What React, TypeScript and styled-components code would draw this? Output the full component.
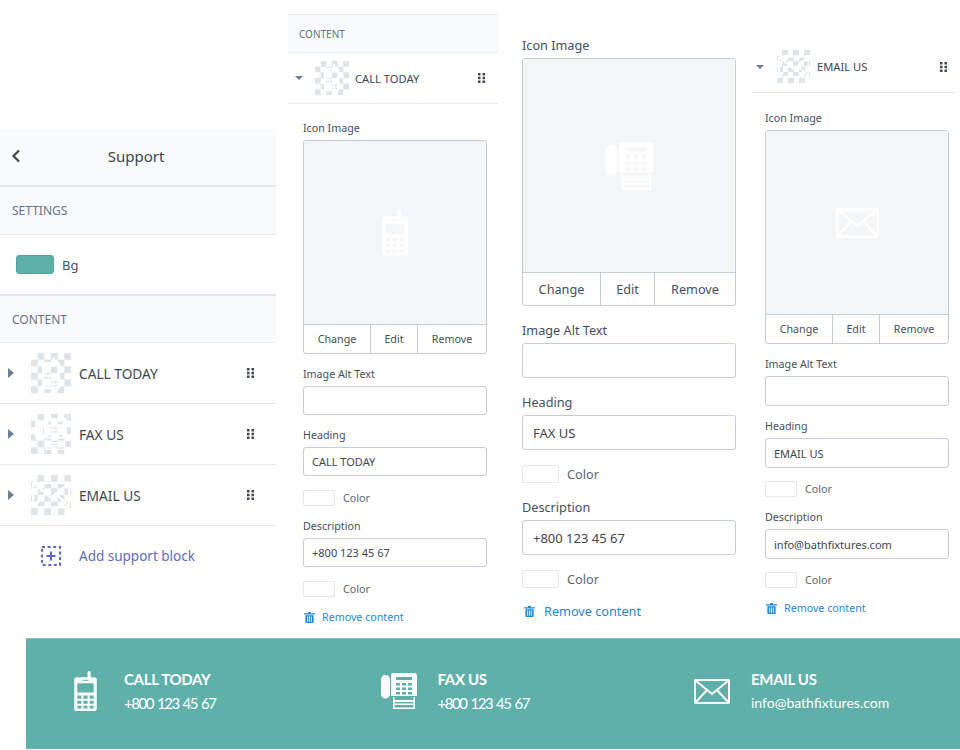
import React from "react";
import styled, {createGlobalStyle, ThemeProvider} from "styled-components";

const GlobalStyle = createGlobalStyle`
  html, body {
    margin: 0;
    padding: 0;
    background: white;
    font-family: "Noto Sans", "Open Sans", sans-serif;
    color: #454f5b;
  }
`;

const compact = {
    width: "184px", inset: "15px", font: "10.7px", line: "18px", labelGap: "3px", fieldGap: "11px", boxGap: "0",
    boxHeight: "211px", buttonHeight: "28px", buttons: "66px 47px 1fr",
    inputHeight: "29px", swatchW: "32px", swatchH: "16px", swatchGap: "14px",
    removeGap: "13px", inputFont: "11px", inputPad: "8px", removeGapX: "7px", removeInset: "1px",
};

const narrowForm = {
    ...compact,
    inset: "13px", boxGap: "2px", inputHeight: "30px", swatchGap: "13px",
};

const large = {
    ...compact,
    width: "214px", inset: "0", font: "12.7px", line: "20px", labelGap: "3px", fieldGap: "14px",
    boxHeight: "245px", buttonHeight: "32px", buttons: "77px 54px 1fr",
    inputHeight: "35px", swatchW: "37px", swatchH: "18px", swatchGap: "15px",
    removeGap: "14px", inputFont: "13px", inputPad: "10px", removeGapX: "9px", removeInset: "2px",
};

const Page = styled.div`
  width: 960px;
  height: 750px;
  overflow: hidden;
`;

const Collage = styled.div`
  display: flex;
  height: 638px;
`;

const Column = styled.div<{ $width: number; $left: number; $top: number }>`
  width: ${p => p.$width}px;
  margin-left: ${p => p.$left}px;
  padding-top: ${p => p.$top}px;
  flex-shrink: 0;
`;

const Header = styled.div`
  display: flex;
  align-items: center;
  justify-content: center;
  box-sizing: border-box;
  height: 58px;
  padding-bottom: 2px;
  background: #f9fafb;
  border-bottom: 2px solid #e3e6ea;
  font-size: 15px;
  color: #3d4650;
`;

const BackBtn = styled.svg`
  width: 10px;
  height: 14px;
  margin-left: 11px;
  margin-right: auto;
`;

const Title = styled.span`
  margin-right: auto;
  margin-left: -25px;
`;

const Band = styled.div<{ $small?: boolean; $height: number }>`
  display: flex;
  align-items: center;
  height: ${p => p.$height}px;
  padding-left: ${p => (p.$small ? "11px" : "12px")};
  background: #f9fafb;
  border-top: ${p => (p.$small ? "1px solid #e3e6ea" : "none")};
  border-bottom: 1px solid #e9ecef;
  font-size: ${p => (p.$small ? "10px" : "12px")};
  color: #637381;
`;

const SettingRow = styled.div`
  display: flex;
  align-items: center;
  gap: 8px;
  height: 59px;
  padding-left: 16px;
  border-bottom: 2px solid #e3e6ea;
  font-size: 13px;
`;

const BgSwatch = styled.span`
  width: 36px;
  height: 17px;
  background: #5fb0a9;
  border: 1px solid #57a19a;
  border-radius: 3px;
`;

const BlockRow = styled.div<{ $open?: boolean; $height: number; $pad: number; $end: number }>`
  display: flex;
  align-items: center;
  height: ${p => p.$height}px;
  padding-left: ${p => p.$pad}px;
  padding-right: ${p => p.$end}px;
  border-bottom: 1px solid #e3e6ea;
  font-size: ${p => (p.$open ? "11.2px" : "13.7px")};
  color: #3d4650;
`;

const Caret = styled.span<{ $open?: boolean; $gap: number }>`
  width: 0;
  height: 0;
  margin-right: ${p => p.$gap}px;
  border-style: solid;
  border-color: transparent;
  ${p =>
    p.$open
        ? `border-width: 4px 4px 0 4px; border-top-color: #6b8094;`
        : `border-width: 5px 0 5px 6px; border-left-color: #6b8094;`}
`;

const Thumb = styled.div<{ $size: number; $gap: number }>`
  display: flex;
  align-items: center;
  justify-content: center;
  width: ${p => p.$size}px;
  height: ${p => p.$size}px;
  margin-right: ${p => p.$gap}px;
  flex-shrink: 0;
  color: white;
  background: conic-gradient(#dfe4e9 25%, #fff 0 50%, #dfe4e9 0 75%, #fff 0);
  background-size: ${p => p.$size / 3}px ${p => p.$size / 3}px;
`;

const Handle = styled.svg`
  width: 7px;
  height: 10px;
  margin-left: auto;
  fill: #3d4650;
`;

const AddRow = styled.div`
  display: flex;
  align-items: center;
  height: 60px;
  padding-left: 41px;
  gap: 18px;
  font-size: 13.5px;
  color: #5c6ac4;
`;

const Form = styled.div`
  width: ${p => p.theme.width};
  margin-left: ${p => p.theme.inset};
`;

const FormTop = styled.div<{ $pad: number }>`
  padding-top: ${p => p.$pad}px;
  margin-bottom: ${p => p.theme.boxGap};
`;

const Label = styled.div`
  margin-top: ${p => p.theme.fieldGap};
  margin-bottom: ${p => p.theme.labelGap};
  font-size: ${p => p.theme.font};
  line-height: ${p => p.theme.line};
  color: #454f5b;
`;

const FirstLabel = styled(Label)`
  margin-top: 0;
`;

const ImageBox = styled.div`
  border: 1px solid #c4cdd5;
  border-radius: 3px;
  overflow: hidden;
`;

const ImageArea = styled.div`
  display: flex;
  align-items: center;
  justify-content: center;
  height: calc(${p => p.theme.boxHeight} - ${p => p.theme.buttonHeight});
  background: #f4f6f8;
  border-bottom: 1px solid #c4cdd5;
  color: white;
`;

const ImageButtons = styled.div`
  display: grid;
  grid-template-columns: ${p => p.theme.buttons};
  height: ${p => p.theme.buttonHeight};
`;

const ImageBtn = styled.div`
  display: flex;
  align-items: center;
  justify-content: center;
  font-size: ${p => p.theme.font};
  color: #454f5b;

  & + & {
    border-left: 1px solid #c4cdd5;
  }
`;

const Input = styled.input`
  display: block;
  box-sizing: border-box;
  width: 100%;
  height: ${p => p.theme.inputHeight};
  padding: 0 ${p => p.theme.inputPad};
  border: 1px solid #c4cdd5;
  border-radius: 3px;
  background: white;
  font-family: inherit;
  font-size: ${p => p.theme.inputFont};
  color: #3d4650;
  outline: none;
`;

const ColorRow = styled.div`
  display: flex;
  align-items: center;
  gap: 8px;
  height: ${p => p.theme.swatchH};
  margin-top: ${p => p.theme.swatchGap};
  font-size: ${p => p.theme.font};
  color: #5d6670;
`;

const ColorSwatch = styled.span`
  box-sizing: border-box;
  width: ${p => p.theme.swatchW};
  height: ${p => p.theme.swatchH};
  border: 1px solid #e3e6ea;
  border-radius: 2px;
`;

const RemoveLink = styled.div`
  display: flex;
  align-items: center;
  gap: ${p => p.theme.removeGapX};
  margin-top: ${p => p.theme.removeGap};
  padding-left: ${p => p.theme.removeInset};
  font-size: ${p => p.theme.font};
  color: #1f87d6;
`;

const Banner = styled.div`
  display: flex;
  box-sizing: border-box;
  height: 111px;
  margin-left: 26px;
  padding: 0 0 6px 30px;
  background: #5fb0a9;
  border-top: 1px solid #86c3bd;
  color: white;
`;

const BannerItem = styled.div`
  display: flex;
  align-items: center;
  gap: 10px;
  flex: 0 0 313.5px;
`;

const BannerIcon = styled.div`
  display: flex;
  justify-content: center;
  width: 58px;
`;

const BannerText = styled.div`
  font-family: "Lato", sans-serif;
  display: flex;
  flex-direction: column;
  gap: 3px;
`;

const BannerHeading = styled.div`
  font-size: 15px;
  line-height: 20px;
  font-weight: 700;
  letter-spacing: -0.3px;
`;

const BannerSub = styled.div<{ $narrow?: boolean }>`
  font-size: ${p => (p.$narrow ? "15px" : "14px")};
  line-height: 22px;
  letter-spacing: ${p => (p.$narrow ? "-1.45px" : "0")};
  word-spacing: ${p => (p.$narrow ? "1.500px" : "0")};
`;

const PhoneIcon = ({width, height}: { width: number; height: number }) => (
    <svg width={width} height={height} viewBox="0 0 22 39" fill="currentColor">
        <path
            fillRule="evenodd"
            d="M13 1.5a1.5 1.5 0 0 1 3 0V6h3.5A2.5 2.5 0 0 1 22 8.500V36.500A2.500 2.500 0 0 1 19.500 39H2.500A2.500 2.500 0 0 1 0 36.500V8.500A2.500 2.500 0 0 1 2.500 6H13ZM3 12v9h16v-9ZM8 8.500v1h6v-1ZM3 24v3h4v-3ZM9 24v3h4v-3ZM15 24v3h4v-3ZM3 29v3h4v-3ZM9 29v3h4v-3ZM15 29v3h4v-3ZM3 34v2.500h4V34ZM9 34v2.500h4V34ZM15 34v2.500h4V34Z"
        />
    </svg>
);

const FaxIcon = ({width, height}: { width: number; height: number }) => (
    <svg width={width} height={height} viewBox="0 0 36 36" fill="currentColor">
        <path d="M4.500 2A4.500 4.500 0 0 1 9 6.500V21a4.500 4.500 0 0 1-9 0V6.500A4.500 4.500 0 0 1 4.500 2Z"/>
        <path
            fillRule="evenodd"
            d="M12 0h21.500A2.500 2.500 0 0 1 36 2.500V23H10V2a2 2 0 0 1 2-2ZM15 4v3h16V4ZM15 10v2.500h4V10ZM21 10v2.500h4V10ZM27 10v2.500h4V10ZM15 14.500V17h4v-2.500ZM21 14.500V17h4v-2.500ZM27 14.500V17h4v-2.500ZM15 19v2.500h4V19ZM21 19v2.500h4V19ZM27 19v2.500h4V19Z"
        />
        <path
            fillRule="evenodd"
            d="M12 24h1.500v3h19v-3H34v12H12ZM13.500 29v1.500h19V29ZM13.500 32v2.500h19V32Z"
        />
    </svg>
);

const MailIcon = ({width, height}: { width: number; height: number }) => (
    <svg width={width} height={height} viewBox="0 0 36 25" fill="none" stroke="currentColor" strokeWidth="2">
        <rect x="1" y="1" width="34" height="23" rx="1"/>
        <path d="M1.500 1.500 18 15 34.500 1.500M1.500 23.500 13 11M34.500 23.500 23 11"/>
    </svg>
);

const AddIcon = () => (
    <svg width="20" height="20" viewBox="0 0 20 20" fill="none" stroke="#5c6ac4" strokeWidth="2">
        <rect x="1" y="1" width="18" height="18" strokeDasharray="3 2.600"/>
        <path d="M10 5.500v9M5.500 10h9"/>
    </svg>
);

const DragHandle = () => (
    <Handle viewBox="0 0 7 10">
        <rect x="0" y="0" width="2.500" height="2.500"/>
        <rect x="4.500" y="0" width="2.500" height="2.500"/>
        <rect x="0" y="3.750" width="2.500" height="2.500"/>
        <rect x="4.500" y="3.750" width="2.500" height="2.500"/>
        <rect x="0" y="7.500" width="2.500" height="2.500"/>
        <rect x="4.500" y="7.500" width="2.500" height="2.500"/>
    </Handle>
);

const TrashIcon = ({size}: { size: number }) => (
    <svg width={size} height={size} viewBox="0 0 12 12" fill="currentColor">
        <path
            fillRule="evenodd"
            d="M4.500 0h3v1.300H12v1.400H0V1.300h4.500ZM1.500 3.500h9V11a1 1 0 0 1-1 1h-7a1 1 0 0 1-1-1ZM3.500 5v5.500h1V5ZM5.500 5v5.500h1V5ZM7.500 5v5.500h1V5Z"
        />
    </svg>
);

const thumbIcons: Record<string, (size: number) => React.ReactNode> = {
    phone: size => <PhoneIcon width={size * 0.45} height={size * 0.8}/>,
    fax: size => <FaxIcon width={size * 0.8} height={size * 0.8}/>,
    mail: size => <MailIcon width={size * 0.95} height={size * 0.66}/>,
};

const ImageForm = ({heading, description, top, icon}: {
    heading: string;
    description: string;
    top: number;
    icon: React.ReactNode;
}) => (
    <Form>
        <FormTop $pad={top}>
            <FirstLabel>Icon Image</FirstLabel>
            <ImageBox>
                <ImageArea>{icon}</ImageArea>
                <ImageButtons>
                    <ImageBtn>Change</ImageBtn>
                    <ImageBtn>Edit</ImageBtn>
                    <ImageBtn>Remove</ImageBtn>
                </ImageButtons>
            </ImageBox>
        </FormTop>
        <Label>Image Alt Text</Label>
        <Input readOnly value=""/>
        <Label>Heading</Label>
        <Input readOnly value={heading}/>
        <ColorRow><ColorSwatch/>Color</ColorRow>
        <Label>Description</Label>
        <Input readOnly value={description}/>
        <ColorRow><ColorSwatch/>Color</ColorRow>
        <RemoveLink><TrashIcon size={11}/>Remove content</RemoveLink>
    </Form>
);

const closedBlocks = [
    {name: "CALL TODAY", icon: "phone"},
    {name: "FAX US", icon: "fax"},
    {name: "EMAIL US", icon: "mail"},
];

const bannerItems = [
    {heading: "CALL TODAY", sub: "+800 123 45 67", narrow: true, icon: <PhoneIcon width={23} height={40}/>},
    {heading: "FAX US", sub: "+800 123 45 67", narrow: true, icon: <FaxIcon width={36} height={36}/>},
    {heading: "EMAIL US", sub: "info@bathfixtures.com", narrow: false, icon: <MailIcon width={36} height={25}/>},
];

const App = () => (
    <Page>
        <GlobalStyle/>
        <Collage>
            <Column $width={276} $left={0} $top={129}>
                <Header>
                    <BackBtn viewBox="0 0 10 14" fill="none" stroke="#3d4650" strokeWidth="2.200">
                        <path d="M8 1.500 2.500 7 8 12.500"/>
                    </BackBtn>
                    <Title>Support</Title>
                </Header>
                <Band $height={47}>SETTINGS</Band>
                <SettingRow><BgSwatch/>Bg</SettingRow>
                <Band $height={46}>CONTENT</Band>
                {closedBlocks.map(block => (
                    <BlockRow key={block.name} $height={60} $pad={8} $end={22}>
                        <Caret $gap={17}/>
                        <Thumb $size={40} $gap={8}>{thumbIcons[block.icon](40)}</Thumb>
                        {block.name}
                        <DragHandle/>
                    </BlockRow>
                ))}
                <AddRow>
                    <AddIcon/>
                    Add support block
                </AddRow>
            </Column>

            <Column $width={210} $left={12} $top={14}>
                <Band $small $height={37}>CONTENT</Band>
                <BlockRow $open $height={50} $pad={7} $end={13}>
                    <Caret $open $gap={12}/>
                    <Thumb $size={34} $gap={6}>{thumbIcons.phone(34)}</Thumb>
                    CALL TODAY
                    <DragHandle/>
                </BlockRow>
                <ThemeProvider theme={compact}>
                    <ImageForm
                        top={15}
                        heading="CALL TODAY"
                        description="+800 123 45 67"
                        icon={<PhoneIcon width={26} height={47}/>}
                    />
                </ThemeProvider>
            </Column>

            <Column $width={214} $left={24} $top={35}>
                <ThemeProvider theme={large}>
                    <ImageForm
                        top={0}
                        heading="FAX US"
                        description="+800 123 45 67"
                        icon={<FaxIcon width={49} height={48}/>}
                    />
                </ThemeProvider>
            </Column>

            <Column $width={203} $left={16} $top={41}>
                <BlockRow $open $height={51} $pad={4} $end={8}>
                    <Caret $open $gap={13}/>
                    <Thumb $size={33} $gap={7}>{thumbIcons.mail(33)}</Thumb>
                    EMAIL US
                    <DragHandle/>
                </BlockRow>
                <ThemeProvider theme={narrowForm}>
                    <ImageForm
                        top={16}
                        heading="EMAIL US"
                        description="info@bathfixtures.com"
                        icon={<MailIcon width={43} height={32}/>}
                    />
                </ThemeProvider>
            </Column>
        </Collage>

        <Banner>
            {bannerItems.map(item => (
                <BannerItem key={item.heading}>
                    <BannerIcon>{item.icon}</BannerIcon>
                    <BannerText>
                        <BannerHeading>{item.heading}</BannerHeading>
                        <BannerSub $narrow={item.narrow}>{item.sub}</BannerSub>
                    </BannerText>
                </BannerItem>
            ))}
        </Banner>
    </Page>
);

export default App;
